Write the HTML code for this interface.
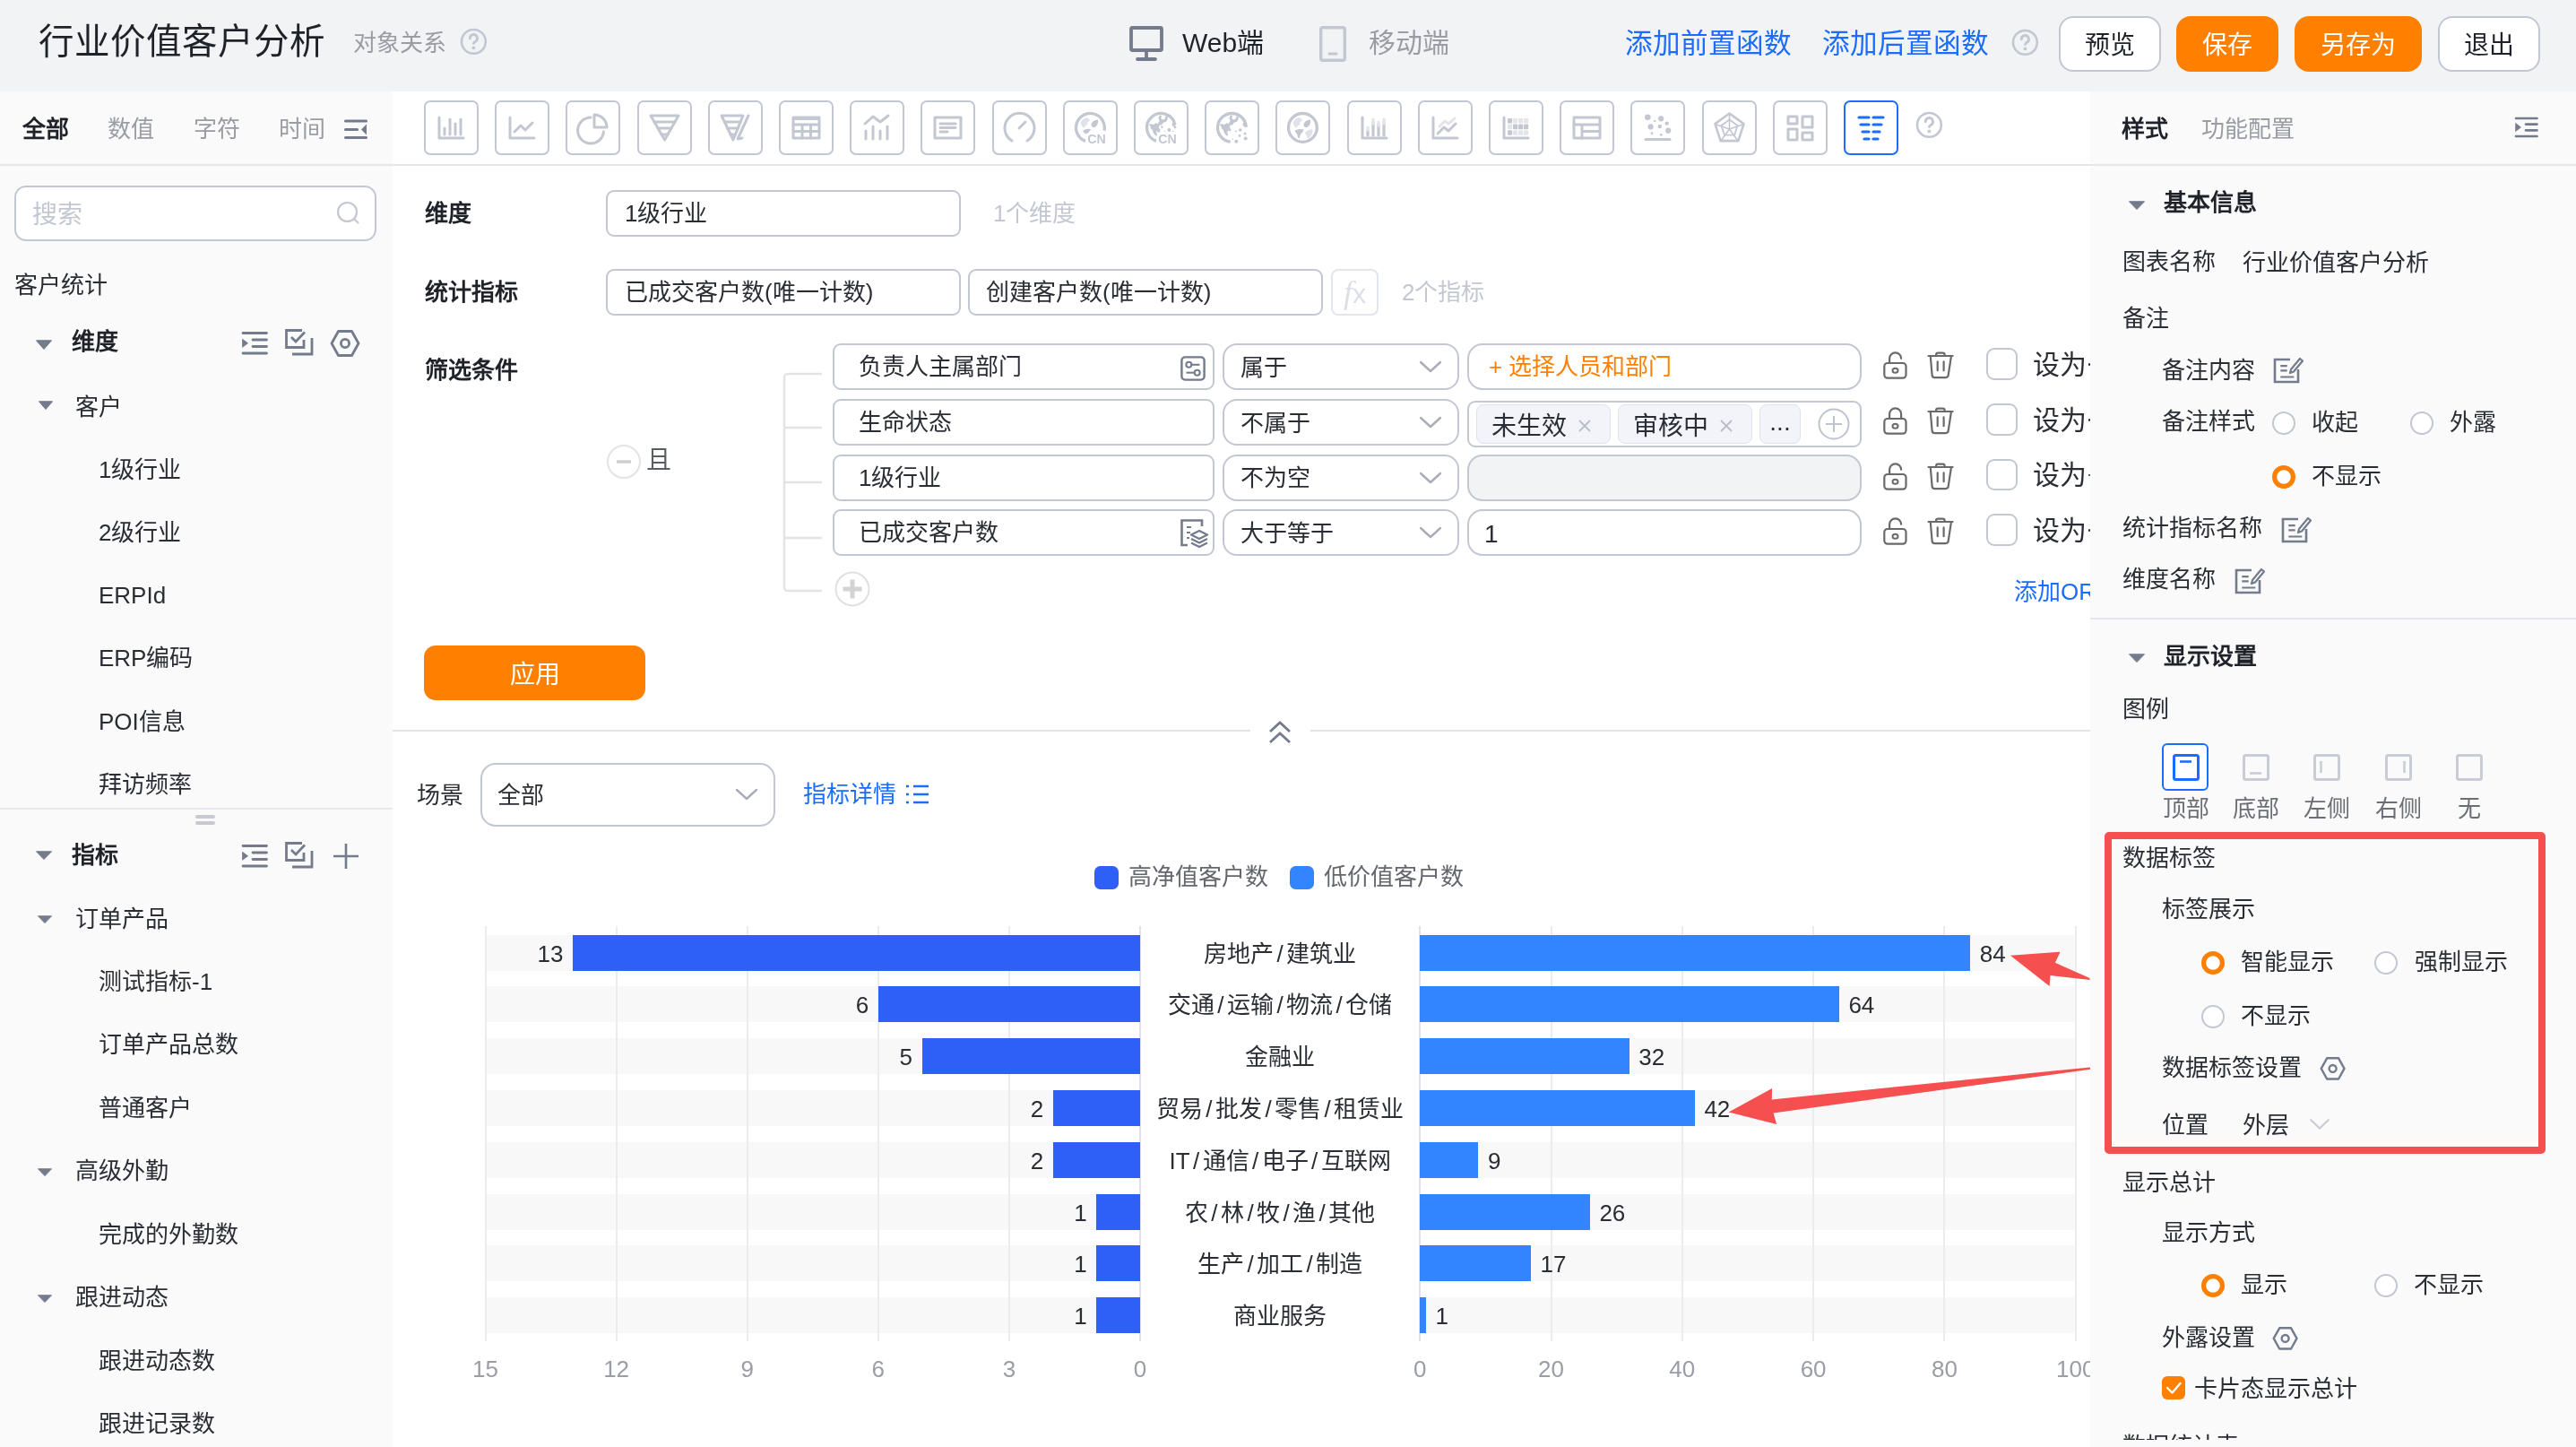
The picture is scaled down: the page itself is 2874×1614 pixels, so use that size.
<!DOCTYPE html>
<html lang="zh-CN"><head><meta charset="utf-8"><title>行业价值客户分析</title>
<style>
html,body{margin:0;padding:0}
body{width:2874px;height:1614px;position:relative;overflow:hidden;background:#fff;font-family:"Liberation Sans",sans-serif;}
.t{position:absolute;line-height:1;white-space:nowrap;transform:translateY(-50%);}
.b{position:absolute;box-sizing:border-box;}
.s{position:absolute;overflow:visible;}
#w{position:absolute;left:0;top:0;width:2874px;height:1614px;will-change:transform;}
</style></head><body><div id="w">
<div class="b" style="left:0px;top:0px;width:2874px;height:102px;background:#f2f3f5;"></div>
<div class="b" style="left:0px;top:102px;width:438px;height:1512px;background:#fafafa;"></div>
<div class="b" style="left:0px;top:183px;width:2874px;height:2px;background:#e4e6ec;"></div>
<div class="t" style="top:47px;font-size:39.5px;color:#1f2329;left:43px;">行业价值客户分析</div>
<div class="t" style="top:48px;font-size:26px;color:#999ca3;left:394px;">对象关系</div>
<svg class="s" style="left:512.8px;top:31.1px;" width="30.8" height="30.8" viewBox="0 0 30.8 30.8" fill="none"><circle cx="15.4" cy="15.4" r="13.4" stroke="#c3c7d1" stroke-width="2.6"/><path d="M11.3 11.9a4.100 4.100 0 1 1 6.200 3.300c-1.400 .8-2.100 1.500-2.100 2.400" stroke="#c3c7d1" stroke-width="2.800" stroke-linecap="round"/><circle cx="15.4" cy="22.4" r="1.900" fill="#c3c7d1"/></svg>
<svg class="s" style="left:1260px;top:29px;" width="40" height="40" viewBox="0 0 40 40" fill="none"><rect x="2" y="2" width="34" height="25" rx="1.500" stroke="#737b8c" stroke-width="3.800"/><path d="M19 27v9M9 37h20" stroke="#737b8c" stroke-width="3.800" stroke-linecap="round"/></svg>
<div class="t" style="top:48px;font-size:30px;color:#1f2329;left:1319px;">Web端</div>
<svg class="s" style="left:1472px;top:29px;" width="32" height="40" viewBox="0 0 32 40" fill="none"><rect x="1.700" y="1.700" width="26.600" height="36.600" rx="2" stroke="#c3c7d1" stroke-width="3.400"/><path d="M11 31h8" stroke="#c3c7d1" stroke-width="3" stroke-linecap="round"/></svg>
<div class="t" style="top:48px;font-size:30px;color:#999ca3;left:1527px;">移动端</div>
<div class="t" style="top:48px;font-size:30.6px;color:#1a6dff;left:1813px;">添加前置函数</div>
<div class="t" style="top:48px;font-size:30.6px;color:#1a6dff;left:2033px;">添加后置函数</div>
<svg class="s" style="left:2243.6px;top:31.9px;" width="30.8" height="30.8" viewBox="0 0 30.8 30.8" fill="none"><circle cx="15.4" cy="15.4" r="13.4" stroke="#c3c7d1" stroke-width="2.6"/><path d="M11.3 11.9a4.100 4.100 0 1 1 6.200 3.300c-1.400 .8-2.100 1.500-2.100 2.400" stroke="#c3c7d1" stroke-width="2.800" stroke-linecap="round"/><circle cx="15.4" cy="22.4" r="1.900" fill="#c3c7d1"/></svg>
<div class="b" style="left:2297px;top:18px;width:114px;height:62px;background:#fff;border:2px solid #c3c7d2;border-radius:16px;"></div>
<div class="t" style="top:50.5px;font-size:28px;color:#1f2329;left:2354.0px;transform:translate(-50%,-50%);">预览</div>
<div class="b" style="left:2428px;top:18px;width:114px;height:62px;background:#ff8000;border-radius:16px;"></div>
<div class="t" style="top:50.5px;font-size:28px;color:#fff;left:2485.0px;transform:translate(-50%,-50%);">保存</div>
<div class="b" style="left:2560px;top:18px;width:142px;height:62px;background:#ff8000;border-radius:16px;"></div>
<div class="t" style="top:50.5px;font-size:28px;color:#fff;left:2631.0px;transform:translate(-50%,-50%);">另存为</div>
<div class="b" style="left:2720px;top:18px;width:114px;height:62px;background:#fff;border:2px solid #c3c7d2;border-radius:16px;"></div>
<div class="t" style="top:50.5px;font-size:28px;color:#1f2329;left:2777.0px;transform:translate(-50%,-50%);">退出</div>
<div class="t" style="top:144px;font-size:26px;color:#1f2329;font-weight:bold;left:25px;">全部</div>
<div class="t" style="top:144px;font-size:26px;color:#999ca3;left:120px;">数值</div>
<div class="t" style="top:144px;font-size:26px;color:#999ca3;left:216px;">字符</div>
<div class="t" style="top:144px;font-size:26px;color:#999ca3;left:311px;">时间</div>
<svg class="s" style="left:384px;top:132px;" width="26" height="24" viewBox="0 0 26 24" fill="none"><path d="M1.500 3h23M1.500 12.500h13M1.500 21.500h23" stroke="#737b8c" stroke-width="3.100" stroke-linecap="round"/><path d="M25 6.500v12l-6-6z" fill="#737b8c"/></svg>
<div class="b" style="left:473.0px;top:112px;width:61px;height:61px;border:2px solid #c3c7d2;border-radius:7px;background:#fff;"></div>
<svg class="s" style="left:473px;top:112px;" width="61" height="61" viewBox="0 0 61 61" fill="none"><path d="M17 19v23h27" stroke="#c3c7d1" stroke-width="3" stroke-linecap="round" stroke-linejoin="round"/><path d="M23 31v7M29 21v17M35 26v12M41 21v17" stroke="#c3c7d1" stroke-width="3" stroke-linecap="round" stroke-linejoin="round"/></svg>
<div class="b" style="left:552.0px;top:112px;width:61px;height:61px;border:2px solid #c3c7d2;border-radius:7px;background:#fff;"></div>
<svg class="s" style="left:552px;top:112px;" width="61" height="61" viewBox="0 0 61 61" fill="none"><path d="M17 19v23h27" stroke="#c3c7d1" stroke-width="3" stroke-linecap="round" stroke-linejoin="round"/><path d="M22 35l7-7 5 5 8-8" stroke="#c3c7d1" stroke-width="3" stroke-linecap="round" stroke-linejoin="round"/></svg>
<div class="b" style="left:631.0px;top:112px;width:61px;height:61px;border:2px solid #c3c7d2;border-radius:7px;background:#fff;"></div>
<svg class="s" style="left:631px;top:112px;" width="61" height="61" viewBox="0 0 61 61" fill="none"><path d="M28 19a14.5 14.5 0 1 0 14.5 16" stroke="#c3c7d1" stroke-width="3" stroke-linecap="round" stroke-linejoin="round"/><path d="M32 16v14h14a14 14 0 0 0-14-14z" stroke="#c3c7d1" stroke-width="3" stroke-linecap="round" stroke-linejoin="round"/></svg>
<div class="b" style="left:711.0px;top:112px;width:61px;height:61px;border:2px solid #c3c7d2;border-radius:7px;background:#fff;"></div>
<svg class="s" style="left:711px;top:112px;" width="61" height="61" viewBox="0 0 61 61" fill="none"><path d="M15 17h31l-15.5 27z" stroke="#c3c7d1" stroke-width="3" stroke-linecap="round" stroke-linejoin="round"/><path d="M19 24h23M23 31h15M27 38h7" stroke="#c3c7d1" stroke-width="3" stroke-linecap="round" stroke-linejoin="round"/></svg>
<div class="b" style="left:790.0px;top:112px;width:61px;height:61px;border:2px solid #c3c7d2;border-radius:7px;background:#fff;"></div>
<svg class="s" style="left:790px;top:112px;" width="61" height="61" viewBox="0 0 61 61" fill="none"><path d="M15 17h24l-11 27z" stroke="#c3c7d1" stroke-width="3" stroke-linecap="round" stroke-linejoin="round"/><path d="M19 24h17M22 31h11M25 38h5" stroke="#c3c7d1" stroke-width="3" stroke-linecap="round" stroke-linejoin="round"/><path d="M45 17l-12 26 5-1" stroke="#c3c7d1" stroke-width="3" stroke-linecap="round" stroke-linejoin="round"/></svg>
<div class="b" style="left:869.0px;top:112px;width:61px;height:61px;border:2px solid #c3c7d2;border-radius:7px;background:#fff;"></div>
<svg class="s" style="left:869px;top:112px;" width="61" height="61" viewBox="0 0 61 61" fill="none"><rect x="16" y="19" width="29" height="23" stroke="#c3c7d1" stroke-width="3" stroke-linecap="round" stroke-linejoin="round"/><path d="M16 27h29M16 34.5h29M26 27v15M35.5 27v15" stroke="#c3c7d1" stroke-width="3" stroke-linecap="round" stroke-linejoin="round"/><path d="M16 20h29" stroke="#c3c7d1" stroke-width="4"/></svg>
<div class="b" style="left:948.0px;top:112px;width:61px;height:61px;border:2px solid #c3c7d2;border-radius:7px;background:#fff;"></div>
<svg class="s" style="left:948px;top:112px;" width="61" height="61" viewBox="0 0 61 61" fill="none"><path d="M18 34v9M26 29v14M34 34v9M42 29v14" stroke="#c3c7d1" stroke-width="3" stroke-linecap="round" stroke-linejoin="round"/><path d="M17 26l9-8 8 6 9-7" stroke="#c3c7d1" stroke-width="3" stroke-linecap="round" stroke-linejoin="round"/></svg>
<div class="b" style="left:1027.0px;top:112px;width:61px;height:61px;border:2px solid #c3c7d2;border-radius:7px;background:#fff;"></div>
<svg class="s" style="left:1027px;top:112px;" width="61" height="61" viewBox="0 0 61 61" fill="none"><rect x="16" y="19" width="29" height="23" stroke="#c3c7d1" stroke-width="3" stroke-linecap="round" stroke-linejoin="round"/><path d="M22 26h17M22 30.5h17M22 35h8" stroke="#c3c7d1" stroke-width="3" stroke-linecap="round" stroke-linejoin="round"/></svg>
<div class="b" style="left:1107.0px;top:112px;width:61px;height:61px;border:2px solid #c3c7d2;border-radius:7px;background:#fff;"></div>
<svg class="s" style="left:1107px;top:112px;" width="61" height="61" viewBox="0 0 61 61" fill="none"><path d="M22 45a16.5 16.5 0 1 1 17 0" stroke="#c3c7d1" stroke-width="3" stroke-linecap="round" stroke-linejoin="round"/><path d="M30 31l7-7" stroke="#c3c7d1" stroke-width="3" stroke-linecap="round" stroke-linejoin="round"/></svg>
<div class="b" style="left:1186.0px;top:112px;width:61px;height:61px;border:2px solid #c3c7d2;border-radius:7px;background:#fff;"></div>
<svg class="s" style="left:1186px;top:112px;" width="61" height="61" viewBox="0 0 61 61" fill="none"><path d="M45.95 33.71A15.9 15.9 0 1 0 24.96 45.34" stroke="#c3c7d1" stroke-width="3.3" fill="none"/><path d="M19.600 25.500c.6-3 3.600-5.800 6.800-6.200l2.800 1.200.6 2.400-2.600 1.400.2 2.600-2.400 1-1 2.600-2.200-.8z" fill="#dfe2ea"/><path d="M31.600 28.200c-.8-3.400 2.800-6.600 7.200-6.800 1 3.400-.6 6.800-3.400 8.600-1.800.4-3.200-.4-3.800-1.800z" fill="#c3c7d1"/><path d="M22.200 33.800c2.200-2 6-2.600 8.800-1.600-1 2.200-3 4.200-5.200 5-2-.4-3.200-1.800-3.600-3.400z" fill="#c3c7d1"/></svg>
<div class="b" style="left:1265.0px;top:112px;width:61px;height:61px;border:2px solid #c3c7d2;border-radius:7px;background:#fff;"></div>
<svg class="s" style="left:1265px;top:112px;" width="61" height="61" viewBox="0 0 61 61" fill="none"><path d="M45.95 27.09A15.9 15.9 0 1 0 24.96 45.34" stroke="#c3c7d1" stroke-width="3.3" fill="none"/><path d="M15.800 27.600l3.200-1.600 2.600 1.200 2.800-2 2.400.8 1.800-3.600-1.200-2.400 1.400-3.400 2.200.4-.6 3 1.600 1.600 2.400-.6 1.400-3.800 1.800.6c.6 2.200-.2 4.600-1.800 6.200l-3 .8-1.600 2.400-2.600.6-.8 2.800 1.800 2-.6 2.200-2.400-1.400-1.600 1.800 1.200 3.200-1.400 1.400c-2.200-1.800-3.400-4.200-4-6.800l-2-1.800-.6-3.200-2.400-.8z" fill="#c3c7d1"/><path d="M42.400 25.800l2.600-1.800c.8 1.400 1.400 3 1.600 4.600l-3.400.4z" fill="#c3c7d1"/><circle cx="27.6" cy="34.2" r="1.5" fill="#c3c7d1"/><circle cx="31.3" cy="29.8" r="1.25" fill="#c3c7d1"/><circle cx="39.4" cy="32.9" r="2.0" fill="#c3c7d1"/><circle cx="46" cy="29.8" r="1.5" fill="#c3c7d1"/><circle cx="34.4" cy="34.2" r="0.6" fill="#c3c7d1"/><circle cx="43.7" cy="34.2" r="0.7" fill="#c3c7d1"/></svg>
<div class="b" style="left:1344.0px;top:112px;width:61px;height:61px;border:2px solid #c3c7d2;border-radius:7px;background:#fff;"></div>
<svg class="s" style="left:1344px;top:112px;" width="61" height="61" viewBox="0 0 61 61" fill="none"><path d="M46.29 29.85A15.9 15.9 0 1 0 28.74 46.21" stroke="#c3c7d1" stroke-width="3.3" fill="none"/><path d="M15.800 27.600l3.200-1.600 2.600 1.200 2.800-2 2.400.8 1.800-3.600-1.200-2.400 1.400-3.400 2.200.4-.6 3 1.600 1.600 2.400-.6 1.400-3.800 1.800.6c.6 2.200-.2 4.600-1.800 6.200l-3 .8-1.600 2.400-2.600.6-.8 2.800 1.800 2-.6 2.200-2.400-1.400-1.600 1.800 1.200 3.200-1.400 1.400c-2.200-1.800-3.400-4.200-4-6.800l-2-1.800-.6-3.200-2.400-.8z" fill="#c3c7d1"/><path d="M42.400 25.800l2.600-1.800c.8 1.400 1.400 3 1.600 4.600l-3.400.4z" fill="#c3c7d1"/><circle cx="39.75" cy="32.9" r="1.75" fill="#c3c7d1"/><circle cx="34.8" cy="34.5" r="1.0" fill="#c3c7d1"/><circle cx="45" cy="37" r="1.5" fill="#c3c7d1"/><circle cx="39" cy="39.5" r="1.4" fill="#c3c7d1"/><circle cx="45.6" cy="42.6" r="2.0" fill="#c3c7d1"/><circle cx="35.3" cy="45.7" r="2.0" fill="#c3c7d1"/><circle cx="31.4" cy="43.2" r="0.7" fill="#c3c7d1"/></svg>
<div class="b" style="left:1423.0px;top:112px;width:61px;height:61px;border:2px solid #c3c7d2;border-radius:7px;background:#fff;"></div>
<svg class="s" style="left:1423px;top:112px;" width="61" height="61" viewBox="0 0 61 61" fill="none"><circle cx="30.4" cy="30.4" r="15.9" stroke="#c3c7d1" stroke-width="3.3"/><path d="M19.600 25.500c.6-3 3.600-5.800 6.800-6.200l2.800 1.200.6 2.400-2.600 1.400.2 2.600-2.400 1-1 2.600-2.200-.8z" fill="#dfe2ea"/><path d="M31.600 28.200c-.8-3.400 2.800-6.600 7.200-6.800 1 3.400-.6 6.800-3.400 8.600-1.800.4-3.200-.4-3.800-1.800z" fill="#c3c7d1"/><path d="M21.800 33.600c2.600-1.800 6.800-2.200 9.800-1-.6 2.400-2.400 3.800-3.600 5.200-.6 1.800-.8 3.600-1.600 5-1.600-1.200-1.800-3.400-2.200-5-1.200-1.200-2.200-2.600-2.400-4.200z" fill="#c3c7d1"/><path d="M33.200 35.400c2-2.200 5.600-3.600 8.200-3.200.6 3.600-1.600 8-5.200 10.400-1.200-.6-1.400-2.200-1-3.400-1.400-.8-2.200-2.400-2-3.800z" fill="#dfe2ea"/></svg>
<div class="t" style="top:154.7px;font-size:14.2px;color:#c3c7d1;font-weight:bold;left:1213.2px;">CN</div>
<div class="t" style="top:154.7px;font-size:14.2px;color:#c3c7d1;font-weight:bold;left:1292.2px;">CN</div>
<div class="b" style="left:1503.0px;top:112px;width:61px;height:61px;border:2px solid #c3c7d2;border-radius:7px;background:#fff;"></div>
<svg class="s" style="left:1503px;top:112px;" width="61" height="61" viewBox="0 0 61 61" fill="none"><path d="M17 19v23h27" stroke="#c3c7d1" stroke-width="3" stroke-linecap="round" stroke-linejoin="round"/><path d="M23 33v6M29 24v15M35 27v12M41 24v15" stroke="#c3c7d1" stroke-width="3.2" stroke-linecap="round"/><path d="M29 21v5M35 24v4M41 21v5M23 30v3" stroke="#e3e5ea" stroke-width="3.2" stroke-linecap="round"/></svg>
<div class="b" style="left:1582.0px;top:112px;width:61px;height:61px;border:2px solid #c3c7d2;border-radius:7px;background:#fff;"></div>
<svg class="s" style="left:1582px;top:112px;" width="61" height="61" viewBox="0 0 61 61" fill="none"><path d="M17 19v23h27" stroke="#c3c7d1" stroke-width="3" stroke-linecap="round" stroke-linejoin="round"/><path d="M22 37l7-7 5 4 8-8" stroke="#c3c7d1" stroke-width="3" stroke-linecap="round" stroke-linejoin="round"/><path d="M24 29l6-6 4 3 7-6" stroke="#e3e5ea" stroke-width="3" stroke-linecap="round" stroke-linejoin="round"/></svg>
<div class="b" style="left:1661.0px;top:112px;width:61px;height:61px;border:2px solid #c3c7d2;border-radius:7px;background:#fff;"></div>
<svg class="s" style="left:1661px;top:112px;" width="61" height="61" viewBox="0 0 61 61" fill="none"><path d="M17 19v23h27" stroke="#c3c7d1" stroke-width="3" stroke-linecap="round" stroke-linejoin="round"/><rect x="21" y="20.0" width="5.2" height="5.6" rx="1" fill="#c3c7d1"/><rect x="27" y="20.0" width="5.2" height="5.6" rx="1" fill="#e3e5ea"/><rect x="33" y="20.0" width="5.2" height="5.6" rx="1" fill="#e3e5ea"/><rect x="39" y="20.0" width="5.2" height="5.6" rx="1" fill="#e3e5ea"/><rect x="21" y="26.6" width="5.2" height="5.6" rx="1" fill="#e3e5ea"/><rect x="27" y="26.6" width="5.2" height="5.6" rx="1" fill="#c3c7d1"/><rect x="33" y="26.6" width="5.2" height="5.6" rx="1" fill="#c3c7d1"/><rect x="39" y="26.6" width="5.2" height="5.6" rx="1" fill="#c3c7d1"/><rect x="21" y="33.2" width="5.2" height="5.6" rx="1" fill="#c3c7d1"/><rect x="27" y="33.2" width="5.2" height="5.6" rx="1" fill="#e3e5ea"/><rect x="33" y="33.2" width="5.2" height="5.6" rx="1" fill="#e3e5ea"/><rect x="39" y="33.2" width="5.2" height="5.6" rx="1" fill="#e3e5ea"/></svg>
<div class="b" style="left:1740.0px;top:112px;width:61px;height:61px;border:2px solid #c3c7d2;border-radius:7px;background:#fff;"></div>
<svg class="s" style="left:1740px;top:112px;" width="61" height="61" viewBox="0 0 61 61" fill="none"><rect x="16" y="19" width="29" height="23" stroke="#c3c7d1" stroke-width="3" stroke-linecap="round" stroke-linejoin="round"/><path d="M16 27h29M25 27v15M25 34.5h20" stroke="#c3c7d1" stroke-width="3" stroke-linecap="round" stroke-linejoin="round"/></svg>
<div class="b" style="left:1819.0px;top:112px;width:61px;height:61px;border:2px solid #c3c7d2;border-radius:7px;background:#fff;"></div>
<svg class="s" style="left:1819px;top:112px;" width="61" height="61" viewBox="0 0 61 61" fill="none"><path d="M17 43.500h27" stroke="#c3c7d1" stroke-width="3" stroke-linecap="round" stroke-linejoin="round"/><circle cx="19.3" cy="18.8" r="3.3" fill="#c3c7d1"/><circle cx="34.2" cy="20.3" r="3.1" fill="#c3c7d1"/><circle cx="40.7" cy="25.6" r="2.2" fill="#c3c7d1"/><circle cx="22.6" cy="29.4" r="3.1" fill="#c3c7d1"/><circle cx="32.8" cy="29" r="2.2" fill="#c3c7d1"/><circle cx="42.2" cy="33.7" r="3.1" fill="#c3c7d1"/><circle cx="24" cy="36.7" r="1.4" fill="#c3c7d1"/><circle cx="34.2" cy="38.3" r="1.4" fill="#c3c7d1"/><circle cx="27.3" cy="23" r="1.2" fill="#c3c7d1"/></svg>
<div class="b" style="left:1899.0px;top:112px;width:61px;height:61px;border:2px solid #c3c7d2;border-radius:7px;background:#fff;"></div>
<svg class="s" style="left:1899px;top:112px;" width="61" height="61" viewBox="0 0 61 61" fill="none"><path d="M30.500 14.500l16 11.600-6.100 19h-19.800l-6.100-19z" stroke="#c3c7d1" stroke-width="2.600" stroke-linejoin="round"/><path d="M30.500 21.500l9 6.600-3.400 10.600h-11.200l-3.400-10.600z" stroke="#c3c7d1" stroke-width="1.800" stroke-linejoin="round"/><path d="M30.500 15v17M14.500 26.600l16 5.400M46.500 26.600l-16 5.400M20.600 45.400l9.900-13.400M40.400 45.400l-9.900-13.400" stroke="#c3c7d1" stroke-width="1.6"/></svg>
<div class="b" style="left:1978.0px;top:112px;width:61px;height:61px;border:2px solid #c3c7d2;border-radius:7px;background:#fff;"></div>
<svg class="s" style="left:1978px;top:112px;" width="61" height="61" viewBox="0 0 61 61" fill="none"><rect x="17" y="18" width="10" height="8" stroke="#c3c7d1" stroke-width="3" stroke-linecap="round" stroke-linejoin="round"/><rect x="33" y="18" width="11" height="12" stroke="#c3c7d1" stroke-width="3" stroke-linecap="round" stroke-linejoin="round"/><rect x="17" y="32" width="10" height="12" stroke="#c3c7d1" stroke-width="3" stroke-linecap="round" stroke-linejoin="round"/><rect x="33" y="36" width="11" height="8" stroke="#c3c7d1" stroke-width="3" stroke-linecap="round" stroke-linejoin="round"/></svg>
<div class="b" style="left:2057.0px;top:112px;width:61px;height:61px;border:2px solid #1a6dff;border-radius:7px;background:#fff;"></div>
<svg class="s" style="left:2057px;top:112px;" width="61" height="61" viewBox="0 0 61 61" fill="none"><path d="M17 19h11M33 19h11M19 27h9M33 27h9M21 35h7M33 35h7M23 43h5M33 43h5" stroke="#1a6dff" stroke-width="3.2" stroke-linecap="round"/></svg>
<svg class="s" style="left:2136.6px;top:124.1px;" width="30.8" height="30.8" viewBox="0 0 30.8 30.8" fill="none"><circle cx="15.4" cy="15.4" r="13.4" stroke="#c3c7d1" stroke-width="2.6"/><path d="M11.3 11.9a4.100 4.100 0 1 1 6.200 3.300c-1.400 .8-2.100 1.500-2.100 2.400" stroke="#c3c7d1" stroke-width="2.800" stroke-linecap="round"/><circle cx="15.4" cy="22.4" r="1.900" fill="#c3c7d1"/></svg>
<div class="b" style="left:16px;top:207px;width:404px;height:62px;background:#fff;border:2px solid #c3c7d2;border-radius:13px;"></div>
<div class="t" style="top:239.5px;font-size:28px;color:#c3c7d1;left:36px;">搜索</div>
<svg class="s" style="left:375px;top:223.5px;" width="28" height="28" viewBox="0 0 28 28" fill="none"><circle cx="12.500" cy="12.500" r="10.500" stroke="#c3c7d1" stroke-width="2.2"/><path d="M20.500 20.500l4 4" stroke="#c3c7d1" stroke-width="2.2" stroke-linecap="round"/></svg>
<div class="t" style="top:318px;font-size:26px;color:#2a2d33;left:16px;">客户统计</div>
<svg class="s" style="left:40px;top:379.0px;" width="18" height="11" viewBox="0 0 18 11" fill="none"><path d="M0.500 0.800h17l-8.5 9.8z" fill="#737b8c" stroke="#737b8c" stroke-width="1" stroke-linejoin="round"/></svg>
<div class="t" style="top:381px;font-size:26px;color:#1f2329;font-weight:bold;left:80px;">维度</div>
<svg class="s" style="left:269px;top:369px;" width="30" height="28" viewBox="0 0 30 28" fill="none"><path d="M2 2.500h26.500M13 10h15.500M13 17.500h15.500M2 25h26.500" stroke="#737b8c" stroke-width="2.800" stroke-linecap="round"/><path d="M1.500 9.300l6 4.500-6 4.500z" fill="#737b8c" stroke="#737b8c" stroke-width=".8" stroke-linejoin="round"/></svg>
<svg class="s" style="left:318px;top:367px;" width="32" height="30" viewBox="0 0 32 30" fill="none"><path d="M19 1.500H1.500v19H21V12" stroke="#737b8c" stroke-width="2.8"/><path d="M7 9l5 5L22 3.500" stroke="#737b8c" stroke-width="2.8"/><path d="M8 28h22V10" stroke="#737b8c" stroke-width="2.8"/></svg>
<svg class="s" style="left:368px;top:368px;" width="34.0" height="30.0" viewBox="0 0 34 30" fill="none"><path d="M9.500 1.500h15l7.500 13.500-7.500 13.500h-15L2 15z" stroke="#737b8c" stroke-width="2.8" stroke-linejoin="round"/><circle cx="17" cy="15" r="4.600" stroke="#737b8c" stroke-width="2.8"/></svg>
<svg class="s" style="left:42.5px;top:447.0px;" width="16" height="10" viewBox="0 0 16 10" fill="none"><path d="M0.500 0.800h15l-7.5 8.8z" fill="#737b8c" stroke="#737b8c" stroke-width="1" stroke-linejoin="round"/></svg>
<div class="t" style="top:453.5px;font-size:26px;color:#2a2d33;left:84px;">客户</div>
<div class="t" style="top:523.5px;font-size:26px;color:#2a2d33;left:110px;">1级行业</div>
<div class="t" style="top:593.8px;font-size:26px;color:#2a2d33;left:110px;">2级行业</div>
<div class="t" style="top:664.1px;font-size:26px;color:#2a2d33;left:110px;">ERPId</div>
<div class="t" style="top:734.4px;font-size:26px;color:#2a2d33;left:110px;">ERP编码</div>
<div class="t" style="top:804.7px;font-size:26px;color:#2a2d33;left:110px;">POI信息</div>
<div class="t" style="top:875.0px;font-size:26px;color:#2a2d33;left:110px;">拜访频率</div>
<div class="b" style="left:0px;top:901px;width:438px;height:713px;background:#fafafa;"></div>
<div class="b" style="left:0px;top:901px;width:438px;height:2px;background:#e8e9ee;"></div>
<div class="b" style="left:218px;top:909px;width:22px;height:4px;background:#c6c9d2;border-radius:2px;"></div>
<div class="b" style="left:218px;top:916px;width:22px;height:4px;background:#c6c9d2;border-radius:2px;"></div>
<svg class="s" style="left:40px;top:949.0px;" width="18" height="10" viewBox="0 0 18 10" fill="none"><path d="M0.500 0.800h17l-8.5 8.8z" fill="#737b8c" stroke="#737b8c" stroke-width="1" stroke-linejoin="round"/></svg>
<div class="t" style="top:953.5px;font-size:26px;color:#1f2329;font-weight:bold;left:80px;">指标</div>
<svg class="s" style="left:269px;top:941px;" width="30" height="28" viewBox="0 0 30 28" fill="none"><path d="M2 2.500h26.500M13 10h15.500M13 17.500h15.500M2 25h26.500" stroke="#737b8c" stroke-width="2.800" stroke-linecap="round"/><path d="M1.500 9.300l6 4.500-6 4.500z" fill="#737b8c" stroke="#737b8c" stroke-width=".8" stroke-linejoin="round"/></svg>
<svg class="s" style="left:318px;top:939px;" width="32" height="30" viewBox="0 0 32 30" fill="none"><path d="M19 1.500H1.500v19H21V12" stroke="#737b8c" stroke-width="2.8"/><path d="M7 9l5 5L22 3.500" stroke="#737b8c" stroke-width="2.8"/><path d="M8 28h22V10" stroke="#737b8c" stroke-width="2.8"/></svg>
<svg class="s" style="left:371px;top:940px;" width="30" height="30" viewBox="0 0 30 30" fill="none"><path d="M15 1v28M1 15h28" stroke="#737b8c" stroke-width="2.6"/></svg>
<svg class="s" style="left:42px;top:1021.0px;" width="16" height="9" viewBox="0 0 16 9" fill="none"><path d="M0.500 0.800h15l-7.5 7.8z" fill="#737b8c" stroke="#737b8c" stroke-width="1" stroke-linejoin="round"/></svg>
<div class="t" style="top:1024.5px;font-size:26px;color:#2a2d33;left:84px;">订单产品</div>
<div class="t" style="top:1094.95px;font-size:26px;color:#2a2d33;left:110px;">测试指标-1</div>
<div class="t" style="top:1165.4px;font-size:26px;color:#2a2d33;left:110px;">订单产品总数</div>
<div class="t" style="top:1235.85px;font-size:26px;color:#2a2d33;left:110px;">普通客户</div>
<svg class="s" style="left:42px;top:1302.8px;" width="16" height="9" viewBox="0 0 16 9" fill="none"><path d="M0.500 0.800h15l-7.5 7.8z" fill="#737b8c" stroke="#737b8c" stroke-width="1" stroke-linejoin="round"/></svg>
<div class="t" style="top:1306.3px;font-size:26px;color:#2a2d33;left:84px;">高级外勤</div>
<div class="t" style="top:1376.75px;font-size:26px;color:#2a2d33;left:110px;">完成的外勤数</div>
<svg class="s" style="left:42px;top:1443.7px;" width="16" height="9" viewBox="0 0 16 9" fill="none"><path d="M0.500 0.800h15l-7.5 7.8z" fill="#737b8c" stroke="#737b8c" stroke-width="1" stroke-linejoin="round"/></svg>
<div class="t" style="top:1447.2px;font-size:26px;color:#2a2d33;left:84px;">跟进动态</div>
<div class="t" style="top:1517.65px;font-size:26px;color:#2a2d33;left:110px;">跟进动态数</div>
<div class="t" style="top:1588.1px;font-size:26px;color:#2a2d33;left:110px;">跟进记录数</div>
<div class="t" style="top:237.5px;font-size:26px;color:#1f2329;font-weight:bold;left:474px;">维度</div>
<div class="b" style="left:676px;top:212px;width:396px;height:52px;background:#fff;border:2px solid #c3c7d2;border-radius:9px;"></div>
<div class="t" style="top:238px;font-size:26px;color:#2a2d33;left:697px;">1级行业</div>
<div class="t" style="top:238px;font-size:26px;color:#c3c7d1;left:1108px;">1个维度</div>
<div class="t" style="top:326px;font-size:26px;color:#1f2329;font-weight:bold;left:474px;">统计指标</div>
<div class="b" style="left:676px;top:300px;width:396px;height:52px;background:#fff;border:2px solid #c3c7d2;border-radius:9px;"></div>
<div class="t" style="top:326px;font-size:26px;color:#2a2d33;left:697px;">已成交客户数(唯一计数)</div>
<div class="b" style="left:1080px;top:300px;width:396px;height:52px;background:#fff;border:2px solid #c3c7d2;border-radius:9px;"></div>
<div class="t" style="top:326px;font-size:26px;color:#2a2d33;left:1100px;">创建客户数(唯一计数)</div>
<div class="b" style="left:1485px;top:300px;width:53px;height:52px;background:#fff;border:2px solid #e3e5ec;border-radius:8px;"></div>
<div class="t" style="top:326px;font-size:30px;color:#dcdfe7;left:1511.5px;transform:translate(-50%,-50%);"><i style="font-family:'Liberation Serif',serif;font-size:36px">f</i>x</div>
<div class="t" style="top:326px;font-size:26px;color:#c3c7d1;left:1564px;">2个指标</div>
<div class="t" style="top:413px;font-size:26px;color:#1f2329;font-weight:bold;left:474px;">筛选条件</div>
<svg class="s" style="left:870px;top:410px;" width="60" height="260" viewBox="0 0 60 260" fill="none"><path d="M47 7H9a4 4 0 0 0-4 4v234a4 4 0 0 0 4 4h38M5 67h42M5 128h42M5 190h42" stroke="#e3e3e5" stroke-width="2.400"/></svg>
<svg class="s" style="left:676px;top:495px;" width="40" height="40" viewBox="0 0 40 40" fill="none"><circle cx="20" cy="20" r="18" stroke="#e3e3e5" stroke-width="2" fill="#fff"/><path d="M12 20h16" stroke="#d0d0d3" stroke-width="3.6"/></svg>
<div class="t" style="top:514px;font-size:28px;color:#5a5d63;left:721px;">且</div>
<svg class="s" style="left:931px;top:637px;" width="40" height="40" viewBox="0 0 40 40" fill="none"><circle cx="20" cy="20" r="18.500" stroke="#e0e0e3" stroke-width="2" fill="#fff"/><path d="M9.500 20h21M20 9.500v21" stroke="#d3d3d5" stroke-width="5"/></svg>
<div class="b" style="left:929px;top:383px;width:426px;height:52px;background:#fff;border:2px solid #c3c7d2;border-radius:9px;"></div>
<div class="t" style="top:409px;font-size:26px;color:#2a2d33;left:958px;">负责人主属部门</div>
<div class="b" style="left:1364px;top:383px;width:264px;height:52px;background:#fff;border:2px solid #c3c7d2;border-radius:16px;"></div>
<div class="t" style="top:409.5px;font-size:26px;color:#2a2d33;left:1384px;">属于</div>
<svg class="s" style="left:1583px;top:402px;" width="26" height="14" viewBox="0 0 26 14" fill="none"><path d="M2 2l11 10L24 2" stroke="#a9adb8" stroke-width="2.400" stroke-linecap="round" stroke-linejoin="round"/></svg>
<div class="b" style="left:1637px;top:383px;width:440px;height:52px;background:#fff;border:2px solid #c3c7d2;border-radius:17px;"></div>
<svg class="s" style="left:2100px;top:391px;" width="30" height="32" viewBox="0 0 30 32" fill="none"><rect x="2.300" y="14" width="24.200" height="16.700" rx="3.600" stroke="#6a6a6c" stroke-width="2.200"/><path d="M8.100 14V8.800a6.500 6.500 0 0 1 13 0" stroke="#6a6a6c" stroke-width="2.200" stroke-linecap="round"/><ellipse cx="14.500" cy="22.300" rx="3" ry="2.500" stroke="#6a6a6c" stroke-width="2"/></svg>
<svg class="s" style="left:2150px;top:391px;" width="31" height="32" viewBox="0 0 31 32" fill="none"><path d="M1.500 6H28.600" stroke="#6a6a6c" stroke-width="2.200" stroke-linecap="round"/><path d="M10.100 6V4.700a2 2 0 0 1 2-2h5.500a2 2 0 0 1 2 2V6" stroke="#6a6a6c" stroke-width="2.200"/><path d="M3.800 6.500L5.600 27.300a3 3 0 0 0 3 2.800h12.100a3 3 0 0 0 3-2.800L26.900 6.500" stroke="#6a6a6c" stroke-width="2.200"/><path d="M11.700 12.400v9.800M18.600 12.400v9.800" stroke="#6a6a6c" stroke-width="2.200" stroke-linecap="round"/></svg>
<div class="b" style="left:2216px;top:388px;width:35px;height:35.5px;background:#fff;border:2px solid #c3c7d2;border-radius:9px;"></div>
<div class="t" style="top:406.8px;font-size:30px;color:#2a2d33;left:2268px;">设为</div>
<div class="b" style="left:2330.3px;top:405.4px;width:2.2px;height:2.2px;background:#2a2d33;border-radius:1.100px;"></div>
<div class="b" style="left:929px;top:445px;width:426px;height:52px;background:#fff;border:2px solid #c3c7d2;border-radius:9px;"></div>
<div class="t" style="top:471px;font-size:26px;color:#2a2d33;left:958px;">生命状态</div>
<div class="b" style="left:1364px;top:445px;width:264px;height:52px;background:#fff;border:2px solid #c3c7d2;border-radius:16px;"></div>
<div class="t" style="top:471.5px;font-size:26px;color:#2a2d33;left:1384px;">不属于</div>
<svg class="s" style="left:1583px;top:464px;" width="26" height="14" viewBox="0 0 26 14" fill="none"><path d="M2 2l11 10L24 2" stroke="#a9adb8" stroke-width="2.400" stroke-linecap="round" stroke-linejoin="round"/></svg>
<div class="b" style="left:1637px;top:446.5px;width:440px;height:52px;background:#fff;border:2px solid #c3c7d2;border-radius:9px;"></div>
<svg class="s" style="left:2100px;top:453px;" width="30" height="32" viewBox="0 0 30 32" fill="none"><rect x="2.300" y="14" width="24.200" height="16.700" rx="3.600" stroke="#6a6a6c" stroke-width="2.200"/><path d="M8.100 14V8.800a6.500 6.500 0 0 1 13 0V14" stroke="#6a6a6c" stroke-width="2.200" stroke-linecap="round"/><ellipse cx="14.500" cy="22.300" rx="3" ry="2.500" stroke="#6a6a6c" stroke-width="2"/></svg>
<svg class="s" style="left:2150px;top:453px;" width="31" height="32" viewBox="0 0 31 32" fill="none"><path d="M1.500 6H28.600" stroke="#6a6a6c" stroke-width="2.200" stroke-linecap="round"/><path d="M10.100 6V4.700a2 2 0 0 1 2-2h5.500a2 2 0 0 1 2 2V6" stroke="#6a6a6c" stroke-width="2.200"/><path d="M3.800 6.500L5.600 27.300a3 3 0 0 0 3 2.800h12.100a3 3 0 0 0 3-2.800L26.900 6.500" stroke="#6a6a6c" stroke-width="2.200"/><path d="M11.700 12.400v9.800M18.600 12.400v9.800" stroke="#6a6a6c" stroke-width="2.200" stroke-linecap="round"/></svg>
<div class="b" style="left:2216px;top:450px;width:35px;height:35.5px;background:#fff;border:2px solid #c3c7d2;border-radius:9px;"></div>
<div class="t" style="top:468.8px;font-size:30px;color:#2a2d33;left:2268px;">设为</div>
<div class="b" style="left:2330.3px;top:467.4px;width:2.2px;height:2.2px;background:#2a2d33;border-radius:1.100px;"></div>
<div class="b" style="left:929px;top:506.5px;width:426px;height:52px;background:#fff;border:2px solid #c3c7d2;border-radius:9px;"></div>
<div class="t" style="top:532.5px;font-size:26px;color:#2a2d33;left:958px;">1级行业</div>
<div class="b" style="left:1364px;top:506.5px;width:264px;height:52px;background:#fff;border:2px solid #c3c7d2;border-radius:16px;"></div>
<div class="t" style="top:533.0px;font-size:26px;color:#2a2d33;left:1384px;">不为空</div>
<svg class="s" style="left:1583px;top:525.5px;" width="26" height="14" viewBox="0 0 26 14" fill="none"><path d="M2 2l11 10L24 2" stroke="#a9adb8" stroke-width="2.400" stroke-linecap="round" stroke-linejoin="round"/></svg>
<div class="b" style="left:1637px;top:506.5px;width:440px;height:52px;background:#f2f3f5;border:2px solid #c3c7d2;border-radius:17px;"></div>
<svg class="s" style="left:2100px;top:514.5px;" width="30" height="32" viewBox="0 0 30 32" fill="none"><rect x="2.300" y="14" width="24.200" height="16.700" rx="3.600" stroke="#6a6a6c" stroke-width="2.200"/><path d="M8.100 14V8.800a6.500 6.500 0 0 1 13 0" stroke="#6a6a6c" stroke-width="2.200" stroke-linecap="round"/><ellipse cx="14.500" cy="22.300" rx="3" ry="2.500" stroke="#6a6a6c" stroke-width="2"/></svg>
<svg class="s" style="left:2150px;top:514.5px;" width="31" height="32" viewBox="0 0 31 32" fill="none"><path d="M1.500 6H28.600" stroke="#6a6a6c" stroke-width="2.200" stroke-linecap="round"/><path d="M10.100 6V4.700a2 2 0 0 1 2-2h5.500a2 2 0 0 1 2 2V6" stroke="#6a6a6c" stroke-width="2.200"/><path d="M3.800 6.500L5.600 27.300a3 3 0 0 0 3 2.800h12.100a3 3 0 0 0 3-2.800L26.900 6.500" stroke="#6a6a6c" stroke-width="2.200"/><path d="M11.700 12.400v9.800M18.600 12.400v9.800" stroke="#6a6a6c" stroke-width="2.200" stroke-linecap="round"/></svg>
<div class="b" style="left:2216px;top:511.5px;width:35px;height:35.5px;background:#fff;border:2px solid #c3c7d2;border-radius:9px;"></div>
<div class="t" style="top:530.3px;font-size:30px;color:#2a2d33;left:2268px;">设为</div>
<div class="b" style="left:2330.3px;top:528.9px;width:2.2px;height:2.2px;background:#2a2d33;border-radius:1.100px;"></div>
<div class="b" style="left:929px;top:568px;width:426px;height:52px;background:#fff;border:2px solid #c3c7d2;border-radius:9px;"></div>
<div class="t" style="top:594px;font-size:26px;color:#2a2d33;left:958px;">已成交客户数</div>
<div class="b" style="left:1364px;top:568px;width:264px;height:52px;background:#fff;border:2px solid #c3c7d2;border-radius:16px;"></div>
<div class="t" style="top:594.5px;font-size:26px;color:#2a2d33;left:1384px;">大于等于</div>
<svg class="s" style="left:1583px;top:587px;" width="26" height="14" viewBox="0 0 26 14" fill="none"><path d="M2 2l11 10L24 2" stroke="#a9adb8" stroke-width="2.400" stroke-linecap="round" stroke-linejoin="round"/></svg>
<div class="b" style="left:1637px;top:568px;width:440px;height:52px;background:#fff;border:2px solid #c3c7d2;border-radius:17px;"></div>
<svg class="s" style="left:2100px;top:576px;" width="30" height="32" viewBox="0 0 30 32" fill="none"><rect x="2.300" y="14" width="24.200" height="16.700" rx="3.600" stroke="#6a6a6c" stroke-width="2.200"/><path d="M8.100 14V8.800a6.500 6.500 0 0 1 13 0" stroke="#6a6a6c" stroke-width="2.200" stroke-linecap="round"/><ellipse cx="14.500" cy="22.300" rx="3" ry="2.500" stroke="#6a6a6c" stroke-width="2"/></svg>
<svg class="s" style="left:2150px;top:576px;" width="31" height="32" viewBox="0 0 31 32" fill="none"><path d="M1.500 6H28.600" stroke="#6a6a6c" stroke-width="2.200" stroke-linecap="round"/><path d="M10.100 6V4.700a2 2 0 0 1 2-2h5.500a2 2 0 0 1 2 2V6" stroke="#6a6a6c" stroke-width="2.200"/><path d="M3.800 6.500L5.600 27.300a3 3 0 0 0 3 2.800h12.100a3 3 0 0 0 3-2.800L26.900 6.500" stroke="#6a6a6c" stroke-width="2.200"/><path d="M11.700 12.400v9.800M18.600 12.400v9.800" stroke="#6a6a6c" stroke-width="2.200" stroke-linecap="round"/></svg>
<div class="b" style="left:2216px;top:573px;width:35px;height:35.5px;background:#fff;border:2px solid #c3c7d2;border-radius:9px;"></div>
<div class="t" style="top:591.8px;font-size:30px;color:#2a2d33;left:2268px;">设为</div>
<div class="b" style="left:2330.3px;top:590.4px;width:2.2px;height:2.2px;background:#2a2d33;border-radius:1.100px;"></div>
<svg class="s" style="left:1317px;top:396.5px;" width="28" height="28" viewBox="0 0 30 30" fill="none"><rect x="1.500" y="1.500" width="27" height="27" rx="4" stroke="#737b8c" stroke-width="2.600"/><circle cx="10" cy="10.500" r="3.200" stroke="#737b8c" stroke-width="2.200"/><path d="M13.500 10.500H23" stroke="#737b8c" stroke-width="2.200"/><circle cx="20" cy="20" r="3.200" stroke="#737b8c" stroke-width="2.200"/><path d="M7 20h9.500" stroke="#737b8c" stroke-width="2.200"/></svg>
<svg class="s" style="left:1317px;top:579px;" width="32" height="34" viewBox="0 0 32 34" fill="none"><path d="M24 8V1.500H1.500V29H8" stroke="#737b8c" stroke-width="2.600"/><path d="M7 9h5M7 15h4M7 21h3" stroke="#737b8c" stroke-width="2.200"/><path d="M21 13l9 4.500-9 4.500-9-4.500zM12 22l9 4.500 9-4.500M12 26.500l9 4.500 9-4.500" stroke="#737b8c" stroke-width="2.200" stroke-linejoin="round"/></svg>
<div class="t" style="top:409px;font-size:26px;color:#ff8000;left:1661px;">+ 选择人员和部门</div>
<div class="b" style="left:1647px;top:451px;width:150px;height:44px;background:#f2f4fa;border:1.500px solid #dfe2ec;border-radius:8px;"></div>
<div class="t" style="top:475.5px;font-size:28px;color:#2a2d33;left:1664px;">未生效</div>
<svg class="s" style="left:1760px;top:467px;" width="16" height="16" viewBox="0 0 16 16" fill="none"><path d="M2 2l12 12M14 2L2 14" stroke="#b9bdc7" stroke-width="1.800"/></svg>
<div class="b" style="left:1805px;top:451px;width:150px;height:44px;background:#f2f4fa;border:1.500px solid #dfe2ec;border-radius:8px;"></div>
<div class="t" style="top:475.5px;font-size:28px;color:#2a2d33;left:1822px;">审核中</div>
<svg class="s" style="left:1918px;top:467px;" width="16" height="16" viewBox="0 0 16 16" fill="none"><path d="M2 2l12 12M14 2L2 14" stroke="#b9bdc7" stroke-width="1.800"/></svg>
<div class="b" style="left:1963px;top:451px;width:46px;height:44px;background:#f2f4fa;border:1.500px solid #dfe2ec;border-radius:8px;"></div>
<div class="t" style="top:471px;font-size:28px;color:#2a2d33;left:1986px;transform:translate(-50%,-50%);">...</div>
<svg class="s" style="left:2027px;top:454px;" width="38" height="38" viewBox="0 0 38 38" fill="none"><circle cx="19" cy="19" r="16.500" stroke="#bfc3cd" stroke-width="2"/><path d="M10 19h18M19 10v18" stroke="#bfc3cd" stroke-width="2"/></svg>
<div class="t" style="top:596px;font-size:28px;color:#2a2d33;left:1656px;">1</div>
<div class="t" style="top:659.5px;font-size:26px;color:#1a6dff;left:2247px;">添加OR</div>
<div class="b" style="left:473px;top:720px;width:247px;height:61px;background:#ff8000;border-radius:13px;"></div>
<div class="t" style="top:753px;font-size:28px;color:#fff;left:596.5px;transform:translate(-50%,-50%);">应用</div>
<div class="b" style="left:438px;top:814px;width:957px;height:2px;background:#e1e3ea;"></div>
<div class="b" style="left:1462px;top:814px;width:870px;height:2px;background:#e1e3ea;"></div>
<svg class="s" style="left:1414px;top:803px;" width="28" height="28" viewBox="0 0 28 28" fill="none"><path d="M3 13l11-10 11 10M3 25l11-10 11 10" stroke="#737b8c" stroke-width="2.800" stroke-linejoin="miter"/></svg>
<div class="t" style="top:887px;font-size:26px;color:#2a2d33;left:465px;">场景</div>
<div class="b" style="left:535.5px;top:851px;width:329.5px;height:71px;background:#fff;border:2px solid #c3c7d2;border-radius:17px;"></div>
<div class="t" style="top:887px;font-size:26px;color:#2a2d33;left:555px;">全部</div>
<svg class="s" style="left:820px;top:879px;" width="26" height="14" viewBox="0 0 26 14" fill="none"><path d="M2 2l11 10L24 2" stroke="#a9adb8" stroke-width="2.400" stroke-linecap="round" stroke-linejoin="round"/></svg>
<div class="t" style="top:886px;font-size:26px;color:#1a6dff;left:896px;">指标详情</div>
<svg class="s" style="left:1010px;top:874px;" width="28" height="24" viewBox="0 0 28 24" fill="none"><path d="M9 3h17M9 12h17M9 21h17" stroke="#1a6dff" stroke-width="2.600"/><path d="M1 3h3M1 12h3M1 21h3" stroke="#1a6dff" stroke-width="2.600"/></svg>
<div class="b" style="left:1221px;top:965.5px;width:26.5px;height:26.5px;background:#2e5ff6;border-radius:6.5px;"></div>
<div class="t" style="top:978px;font-size:26px;color:#63666d;left:1259px;">高净值客户数</div>
<div class="b" style="left:1439px;top:965.5px;width:26.5px;height:26.5px;background:#3385ff;border-radius:6.5px;"></div>
<div class="t" style="top:978px;font-size:26px;color:#63666d;left:1477px;">低价值客户数</div>
<div class="b" style="left:541.5px;top:1042.6px;width:730.5px;height:40px;background:#f8f8f9;"></div>
<div class="b" style="left:1584.2px;top:1042.6px;width:732.4999999999998px;height:40px;background:#f8f8f9;"></div>
<div class="b" style="left:541.5px;top:1100.4px;width:730.5px;height:40px;background:#f8f8f9;"></div>
<div class="b" style="left:1584.2px;top:1100.4px;width:732.4999999999998px;height:40px;background:#f8f8f9;"></div>
<div class="b" style="left:541.5px;top:1158.2px;width:730.5px;height:40px;background:#f8f8f9;"></div>
<div class="b" style="left:1584.2px;top:1158.2px;width:732.4999999999998px;height:40px;background:#f8f8f9;"></div>
<div class="b" style="left:541.5px;top:1216.0px;width:730.5px;height:40px;background:#f8f8f9;"></div>
<div class="b" style="left:1584.2px;top:1216.0px;width:732.4999999999998px;height:40px;background:#f8f8f9;"></div>
<div class="b" style="left:541.5px;top:1273.8px;width:730.5px;height:40px;background:#f8f8f9;"></div>
<div class="b" style="left:1584.2px;top:1273.8px;width:732.4999999999998px;height:40px;background:#f8f8f9;"></div>
<div class="b" style="left:541.5px;top:1331.6px;width:730.5px;height:40px;background:#f8f8f9;"></div>
<div class="b" style="left:1584.2px;top:1331.6px;width:732.4999999999998px;height:40px;background:#f8f8f9;"></div>
<div class="b" style="left:541.5px;top:1389.4px;width:730.5px;height:40px;background:#f8f8f9;"></div>
<div class="b" style="left:1584.2px;top:1389.4px;width:732.4999999999998px;height:40px;background:#f8f8f9;"></div>
<div class="b" style="left:541.5px;top:1447.2px;width:730.5px;height:40px;background:#f8f8f9;"></div>
<div class="b" style="left:1584.2px;top:1447.2px;width:732.4999999999998px;height:40px;background:#f8f8f9;"></div>
<div class="b" style="left:540.5px;top:1033px;width:2px;height:463px;background:#ececef;"></div>
<div class="t" style="top:1527px;font-size:26px;color:#9a9da5;left:541.5px;transform:translate(-50%,-50%);">15</div>
<div class="b" style="left:1583.2px;top:1033px;width:2px;height:463px;background:#dfe2ee;"></div>
<div class="t" style="top:1527px;font-size:26px;color:#9a9da5;left:1584.2px;transform:translate(-50%,-50%);">0</div>
<div class="b" style="left:686.6px;top:1033px;width:2px;height:463px;background:#ececef;"></div>
<div class="t" style="top:1527px;font-size:26px;color:#9a9da5;left:687.6px;transform:translate(-50%,-50%);">12</div>
<div class="b" style="left:1729.5px;top:1033px;width:2px;height:463px;background:#ececef;"></div>
<div class="t" style="top:1527px;font-size:26px;color:#9a9da5;left:1730.5px;transform:translate(-50%,-50%);">20</div>
<div class="b" style="left:832.7px;top:1033px;width:2px;height:463px;background:#ececef;"></div>
<div class="t" style="top:1527px;font-size:26px;color:#9a9da5;left:833.7px;transform:translate(-50%,-50%);">9</div>
<div class="b" style="left:1875.8px;top:1033px;width:2px;height:463px;background:#ececef;"></div>
<div class="t" style="top:1527px;font-size:26px;color:#9a9da5;left:1876.8px;transform:translate(-50%,-50%);">40</div>
<div class="b" style="left:978.8px;top:1033px;width:2px;height:463px;background:#ececef;"></div>
<div class="t" style="top:1527px;font-size:26px;color:#9a9da5;left:979.8px;transform:translate(-50%,-50%);">6</div>
<div class="b" style="left:2022.1px;top:1033px;width:2px;height:463px;background:#ececef;"></div>
<div class="t" style="top:1527px;font-size:26px;color:#9a9da5;left:2023.1px;transform:translate(-50%,-50%);">60</div>
<div class="b" style="left:1124.9px;top:1033px;width:2px;height:463px;background:#ececef;"></div>
<div class="t" style="top:1527px;font-size:26px;color:#9a9da5;left:1125.9px;transform:translate(-50%,-50%);">3</div>
<div class="b" style="left:2168.4px;top:1033px;width:2px;height:463px;background:#ececef;"></div>
<div class="t" style="top:1527px;font-size:26px;color:#9a9da5;left:2169.4px;transform:translate(-50%,-50%);">80</div>
<div class="b" style="left:1271.0px;top:1033px;width:2px;height:463px;background:#dfe2ee;"></div>
<div class="t" style="top:1527px;font-size:26px;color:#9a9da5;left:1272.0px;transform:translate(-50%,-50%);">0</div>
<div class="b" style="left:2314.7px;top:1033px;width:2px;height:463px;background:#ececef;"></div>
<div class="t" style="top:1527px;font-size:26px;color:#9a9da5;left:2315.7px;transform:translate(-50%,-50%);">100</div>
<div class="b" style="left:638.9px;top:1042.6px;width:633.1px;height:40px;background:#2e5ff6;"></div>
<div class="t" style="top:1063.6px;font-size:26px;color:#2a2d33;left:628.4px;transform:translate(-100%,-50%);">13</div>
<div class="b" style="left:1584.2px;top:1042.6px;width:614.0px;height:40px;background:#3385ff;"></div>
<div class="t" style="top:1063.6px;font-size:26px;color:#2a2d33;left:2208.7px;">84</div>
<div class="t" style="top:1063.6px;font-size:26px;color:#2a2d33;left:1428px;transform:translate(-50%,-50%);">房地产<span style="margin:0 3.4px">/</span>建筑业</div>
<div class="b" style="left:979.8px;top:1100.4px;width:292.2px;height:40px;background:#2e5ff6;"></div>
<div class="t" style="top:1121.4px;font-size:26px;color:#2a2d33;left:969.3px;transform:translate(-100%,-50%);">6</div>
<div class="b" style="left:1584.2px;top:1100.4px;width:467.7px;height:40px;background:#3385ff;"></div>
<div class="t" style="top:1121.4px;font-size:26px;color:#2a2d33;left:2062.4px;">64</div>
<div class="t" style="top:1121.4px;font-size:26px;color:#2a2d33;left:1428px;transform:translate(-50%,-50%);">交通<span style="margin:0 3.4px">/</span>运输<span style="margin:0 3.4px">/</span>物流<span style="margin:0 3.4px">/</span>仓储</div>
<div class="b" style="left:1028.5px;top:1158.2px;width:243.5px;height:40px;background:#2e5ff6;"></div>
<div class="t" style="top:1179.2px;font-size:26px;color:#2a2d33;left:1018.0px;transform:translate(-100%,-50%);">5</div>
<div class="b" style="left:1584.2px;top:1158.2px;width:233.6px;height:40px;background:#3385ff;"></div>
<div class="t" style="top:1179.2px;font-size:26px;color:#2a2d33;left:1828.3px;">32</div>
<div class="t" style="top:1179.2px;font-size:26px;color:#2a2d33;left:1428px;transform:translate(-50%,-50%);">金融业</div>
<div class="b" style="left:1174.6px;top:1216.0px;width:97.4px;height:40px;background:#2e5ff6;"></div>
<div class="t" style="top:1237.0px;font-size:26px;color:#2a2d33;left:1164.1px;transform:translate(-100%,-50%);">2</div>
<div class="b" style="left:1584.2px;top:1216.0px;width:306.7px;height:40px;background:#3385ff;"></div>
<div class="t" style="top:1237.0px;font-size:26px;color:#2a2d33;left:1901.4px;">42</div>
<div class="t" style="top:1237.0px;font-size:26px;color:#2a2d33;left:1428px;transform:translate(-50%,-50%);">贸易<span style="margin:0 3.4px">/</span>批发<span style="margin:0 3.4px">/</span>零售<span style="margin:0 3.4px">/</span>租赁业</div>
<div class="b" style="left:1174.6px;top:1273.8px;width:97.4px;height:40px;background:#2e5ff6;"></div>
<div class="t" style="top:1294.8px;font-size:26px;color:#2a2d33;left:1164.1px;transform:translate(-100%,-50%);">2</div>
<div class="b" style="left:1584.2px;top:1273.8px;width:65.3px;height:40px;background:#3385ff;"></div>
<div class="t" style="top:1294.8px;font-size:26px;color:#2a2d33;left:1660.0px;">9</div>
<div class="t" style="top:1294.8px;font-size:26px;color:#2a2d33;left:1428px;transform:translate(-50%,-50%);">IT<span style="margin:0 3.4px">/</span>通信<span style="margin:0 3.4px">/</span>电子<span style="margin:0 3.4px">/</span>互联网</div>
<div class="b" style="left:1223.3px;top:1331.6px;width:48.7px;height:40px;background:#2e5ff6;"></div>
<div class="t" style="top:1352.6px;font-size:26px;color:#2a2d33;left:1212.8px;transform:translate(-100%,-50%);">1</div>
<div class="b" style="left:1584.2px;top:1331.6px;width:189.7px;height:40px;background:#3385ff;"></div>
<div class="t" style="top:1352.6px;font-size:26px;color:#2a2d33;left:1784.4px;">26</div>
<div class="t" style="top:1352.6px;font-size:26px;color:#2a2d33;left:1428px;transform:translate(-50%,-50%);">农<span style="margin:0 3.4px">/</span>林<span style="margin:0 3.4px">/</span>牧<span style="margin:0 3.4px">/</span>渔<span style="margin:0 3.4px">/</span>其他</div>
<div class="b" style="left:1223.3px;top:1389.4px;width:48.7px;height:40px;background:#2e5ff6;"></div>
<div class="t" style="top:1410.4px;font-size:26px;color:#2a2d33;left:1212.8px;transform:translate(-100%,-50%);">1</div>
<div class="b" style="left:1584.2px;top:1389.4px;width:123.9px;height:40px;background:#3385ff;"></div>
<div class="t" style="top:1410.4px;font-size:26px;color:#2a2d33;left:1718.6px;">17</div>
<div class="t" style="top:1410.4px;font-size:26px;color:#2a2d33;left:1428px;transform:translate(-50%,-50%);">生产<span style="margin:0 3.4px">/</span>加工<span style="margin:0 3.4px">/</span>制造</div>
<div class="b" style="left:1223.3px;top:1447.2px;width:48.7px;height:40px;background:#2e5ff6;"></div>
<div class="t" style="top:1468.2px;font-size:26px;color:#2a2d33;left:1212.8px;transform:translate(-100%,-50%);">1</div>
<div class="b" style="left:1584.2px;top:1447.2px;width:6.8px;height:40px;background:#3385ff;"></div>
<div class="t" style="top:1468.2px;font-size:26px;color:#2a2d33;left:1601.5px;">1</div>
<div class="t" style="top:1468.2px;font-size:26px;color:#2a2d33;left:1428px;transform:translate(-50%,-50%);">商业服务</div>
<svg class="s" style="left:0px;top:0px;" width="2874" height="1614" viewBox="0 0 2874 1614" fill="none"><path d="M2242.9 1065.7L2298.6 1061.8L2292.9 1073.8L2331.500 1091L2331.500 1093L2287.500 1088L2286.600 1100Z" fill="#f5504f"/><path d="M1928.600 1240.500L1977.100 1213.900L1976.800 1226.400L2332 1190.400L2332 1192.800L1978.600 1241.600L1982.100 1254.100Z" fill="#f5504f"/></svg>
<div class="b" style="left:2332px;top:102px;width:542px;height:1512px;background:#fafafa;"></div>
<div class="b" style="left:2332px;top:183px;width:542px;height:2px;background:#e4e6ec;"></div>
<div class="t" style="top:144px;font-size:26px;color:#1f2329;font-weight:bold;left:2367px;">样式</div>
<div class="t" style="top:144px;font-size:26px;color:#999ca3;left:2456px;">功能配置</div>
<svg class="s" style="left:2805px;top:129.5px;" width="28" height="24" viewBox="0 0 28 24" fill="none"><path d="M2 2h23.500M13 8.600h12.500M13 15.300h12.500M2 22h23.500" stroke="#737b8c" stroke-width="2.700" stroke-linecap="round"/><path d="M1.500 7.300l6 4.700-6 4.700z" fill="#737b8c" stroke="#737b8c" stroke-width=".6" stroke-linejoin="round"/></svg>
<svg class="s" style="left:2375px;top:224.0px;" width="18" height="10" viewBox="0 0 18 10" fill="none"><path d="M0.500 0.800h17l-8.5 8.8z" fill="#737b8c" stroke="#737b8c" stroke-width="1" stroke-linejoin="round"/></svg>
<div class="t" style="top:226px;font-size:26px;color:#1f2329;font-weight:bold;left:2414px;">基本信息</div>
<div class="t" style="top:292px;font-size:26px;color:#2a2d33;left:2368px;">图表名称</div>
<div class="t" style="top:293px;font-size:26px;color:#2a2d33;left:2502px;">行业价值客户分析</div>
<div class="t" style="top:355px;font-size:26px;color:#2a2d33;left:2368px;">备注</div>
<div class="t" style="top:413px;font-size:26px;color:#2a2d33;left:2412px;">备注内容</div>
<svg class="s" style="left:2536px;top:396px;" width="34" height="32" viewBox="0 0 34 32" fill="none"><path d="M19 5H2v25h26V16" stroke="#737b8c" stroke-width="2.600"/><path d="M8.300 12.200h7.400M8.300 17.300h7.400M8.300 24.500h15" stroke="#737b8c" stroke-width="2.200"/><path d="M20 16l10-12 3 2.500-10 12-4 1.500z" fill="#fafafa" stroke="#737b8c" stroke-width="2.200" stroke-linejoin="round"/></svg>
<div class="t" style="top:470px;font-size:26px;color:#2a2d33;left:2412px;">备注样式</div>
<svg class="s" style="left:2534px;top:458px;" width="28" height="28" viewBox="0 0 28 28" fill="none"><circle cx="14" cy="14" r="12" stroke="#c3c7d2" stroke-width="2" fill="#fff"/></svg>
<div class="t" style="top:471px;font-size:26px;color:#2a2d33;left:2579px;">收起</div>
<svg class="s" style="left:2688px;top:458px;" width="28" height="28" viewBox="0 0 28 28" fill="none"><circle cx="14" cy="14" r="12" stroke="#c3c7d2" stroke-width="2" fill="#fff"/></svg>
<div class="t" style="top:471px;font-size:26px;color:#2a2d33;left:2733px;">外露</div>
<svg class="s" style="left:2534px;top:517.5px;" width="28" height="28" viewBox="0 0 28 28" fill="none"><circle cx="14" cy="14" r="10.400" stroke="#ff8000" stroke-width="5.200" fill="#fff"/></svg>
<div class="t" style="top:531px;font-size:26px;color:#2a2d33;left:2579px;">不显示</div>
<div class="t" style="top:589px;font-size:26px;color:#2a2d33;left:2368px;">统计指标名称</div>
<svg class="s" style="left:2545px;top:574px;" width="34" height="32" viewBox="0 0 34 32" fill="none"><path d="M19 5H2v25h26V16" stroke="#737b8c" stroke-width="2.600"/><path d="M8.300 12.200h7.400M8.300 17.300h7.400M8.300 24.500h15" stroke="#737b8c" stroke-width="2.200"/><path d="M20 16l10-12 3 2.500-10 12-4 1.500z" fill="#fafafa" stroke="#737b8c" stroke-width="2.200" stroke-linejoin="round"/></svg>
<div class="t" style="top:646px;font-size:26px;color:#2a2d33;left:2368px;">维度名称</div>
<svg class="s" style="left:2493px;top:631px;" width="34" height="32" viewBox="0 0 34 32" fill="none"><path d="M19 5H2v25h26V16" stroke="#737b8c" stroke-width="2.600"/><path d="M8.300 12.200h7.400M8.300 17.300h7.400M8.300 24.500h15" stroke="#737b8c" stroke-width="2.200"/><path d="M20 16l10-12 3 2.500-10 12-4 1.500z" fill="#fafafa" stroke="#737b8c" stroke-width="2.200" stroke-linejoin="round"/></svg>
<div class="b" style="left:2332px;top:689px;width:542px;height:2px;background:#e4e6ec;"></div>
<svg class="s" style="left:2375px;top:729.0px;" width="18" height="10" viewBox="0 0 18 10" fill="none"><path d="M0.500 0.800h17l-8.5 8.8z" fill="#737b8c" stroke="#737b8c" stroke-width="1" stroke-linejoin="round"/></svg>
<div class="t" style="top:731.5px;font-size:26px;color:#1f2329;font-weight:bold;left:2414px;">显示设置</div>
<div class="t" style="top:791px;font-size:26px;color:#2a2d33;left:2368px;">图例</div>
<div class="b" style="left:2412px;top:829px;width:52px;height:53px;border:2px solid #1a6dff;border-radius:6px;background:#fff;"></div>
<svg class="s" style="left:2424px;top:841px;" width="30" height="30" viewBox="0 0 30 30" fill="none"><rect x="1.500" y="1.500" width="27" height="27" rx="2" stroke="#1a6dff" stroke-width="3"/><path d="M8 8.500h13" stroke="#1a6dff" stroke-width="2.600"/></svg>
<div class="t" style="top:901.5px;font-size:26px;color:#6b6e75;left:2439px;transform:translate(-50%,-50%);">顶部</div>
<svg class="s" style="left:2502px;top:841px;" width="30" height="30" viewBox="0 0 30 30" fill="none"><rect x="1.500" y="1.500" width="27" height="27" rx="2" stroke="#c9ccd5" stroke-width="3"/><path d="M8 21.500h13" stroke="#c9ccd5" stroke-width="2.600"/></svg>
<div class="t" style="top:901.5px;font-size:26px;color:#6b6e75;left:2517px;transform:translate(-50%,-50%);">底部</div>
<svg class="s" style="left:2581px;top:841px;" width="30" height="30" viewBox="0 0 30 30" fill="none"><rect x="1.500" y="1.500" width="27" height="27" rx="2" stroke="#c9ccd5" stroke-width="3"/><path d="M8.500 8v13" stroke="#c9ccd5" stroke-width="2.600"/></svg>
<div class="t" style="top:901.5px;font-size:26px;color:#6b6e75;left:2596px;transform:translate(-50%,-50%);">左侧</div>
<svg class="s" style="left:2661px;top:841px;" width="30" height="30" viewBox="0 0 30 30" fill="none"><rect x="1.500" y="1.500" width="27" height="27" rx="2" stroke="#c9ccd5" stroke-width="3"/><path d="M21.500 8v13" stroke="#c9ccd5" stroke-width="2.600"/></svg>
<div class="t" style="top:901.5px;font-size:26px;color:#6b6e75;left:2676px;transform:translate(-50%,-50%);">右侧</div>
<svg class="s" style="left:2740px;top:841px;" width="30" height="30" viewBox="0 0 30 30" fill="none"><rect x="1.500" y="1.500" width="27" height="27" rx="2" stroke="#c9ccd5" stroke-width="3"/></svg>
<div class="t" style="top:901.5px;font-size:26px;color:#6b6e75;left:2755px;transform:translate(-50%,-50%);">无</div>
<div class="t" style="top:957px;font-size:26px;color:#2a2d33;left:2368px;">数据标签</div>
<div class="t" style="top:1014px;font-size:26px;color:#2a2d33;left:2412px;">标签展示</div>
<svg class="s" style="left:2455px;top:1060px;" width="28" height="28" viewBox="0 0 28 28" fill="none"><circle cx="14" cy="14" r="10.400" stroke="#ff8000" stroke-width="5.200" fill="#fff"/></svg>
<div class="t" style="top:1073px;font-size:26px;color:#2a2d33;left:2500px;">智能显示</div>
<svg class="s" style="left:2648px;top:1060px;" width="28" height="28" viewBox="0 0 28 28" fill="none"><circle cx="14" cy="14" r="12" stroke="#c3c7d2" stroke-width="2" fill="#fff"/></svg>
<div class="t" style="top:1073px;font-size:26px;color:#2a2d33;left:2694px;">强制显示</div>
<svg class="s" style="left:2455px;top:1119.5px;" width="28" height="28" viewBox="0 0 28 28" fill="none"><circle cx="14" cy="14" r="12" stroke="#c3c7d2" stroke-width="2" fill="#fff"/></svg>
<div class="t" style="top:1133px;font-size:26px;color:#2a2d33;left:2500px;">不显示</div>
<div class="t" style="top:1191px;font-size:26px;color:#2a2d33;left:2412px;">数据标签设置</div>
<svg class="s" style="left:2588px;top:1178.5px;" width="29.24" height="25.8" viewBox="0 0 34 30" fill="none"><path d="M9.500 1.500h15l7.500 13.500-7.500 13.500h-15L2 15z" stroke="#737b8c" stroke-width="2.8" stroke-linejoin="round"/><circle cx="17" cy="15" r="4.600" stroke="#737b8c" stroke-width="2.8"/></svg>
<div class="t" style="top:1255px;font-size:26px;color:#2a2d33;left:2412px;">位置</div>
<div class="t" style="top:1255px;font-size:26px;color:#2a2d33;left:2502px;">外层</div>
<svg class="s" style="left:2576px;top:1247px;" width="24" height="14" viewBox="0 0 24 14" fill="none"><path d="M1.500 1.500l10.500 10L22.500 1.500" stroke="#c9ccd5" stroke-width="2"/></svg>
<div class="b" style="left:2348px;top:928px;width:492px;height:359px;border:8px solid #f5504f;border-radius:5px;"></div>
<div class="t" style="top:1318.5px;font-size:26px;color:#2a2d33;left:2368px;">显示总计</div>
<div class="t" style="top:1375px;font-size:26px;color:#2a2d33;left:2412px;">显示方式</div>
<svg class="s" style="left:2455px;top:1420px;" width="28" height="28" viewBox="0 0 28 28" fill="none"><circle cx="14" cy="14" r="10.400" stroke="#ff8000" stroke-width="5.200" fill="#fff"/></svg>
<div class="t" style="top:1433px;font-size:26px;color:#2a2d33;left:2500px;">显示</div>
<svg class="s" style="left:2648px;top:1420px;" width="28" height="28" viewBox="0 0 28 28" fill="none"><circle cx="14" cy="14" r="12" stroke="#c3c7d2" stroke-width="2" fill="#fff"/></svg>
<div class="t" style="top:1433px;font-size:26px;color:#2a2d33;left:2693px;">不显示</div>
<div class="t" style="top:1492px;font-size:26px;color:#2a2d33;left:2412px;">外露设置</div>
<svg class="s" style="left:2535px;top:1479.5px;" width="29.24" height="25.8" viewBox="0 0 34 30" fill="none"><path d="M9.500 1.500h15l7.500 13.500-7.500 13.500h-15L2 15z" stroke="#737b8c" stroke-width="2.8" stroke-linejoin="round"/><circle cx="17" cy="15" r="4.600" stroke="#737b8c" stroke-width="2.8"/></svg>
<div class="b" style="left:2412px;top:1535.3px;width:26px;height:26px;background:#ff8000;border-radius:6px;"></div>
<svg class="s" style="left:2412px;top:1535.3px;" width="26" height="26" viewBox="0 0 26 26" fill="none"><path d="M6 13l5.500 5.500L20.500 8" stroke="#fff" stroke-width="2.400" stroke-linecap="round" stroke-linejoin="round"/></svg>
<div class="t" style="top:1549px;font-size:26px;color:#2a2d33;left:2448px;">卡片态显示总计</div>
<div class="t" style="top:1613px;font-size:26px;color:#2a2d33;left:2368px;">数据统计表</div>
<div class="b" style="left:2332px;top:1606px;width:542px;height:8px;background:#fafafa;"></div>
</div></body></html>
